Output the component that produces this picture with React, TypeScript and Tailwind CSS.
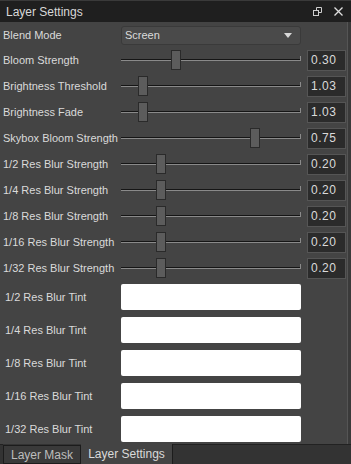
import React from "react";

const sliders = [
  { label: "Bloom Strength", pos: 50, value: "0.30" },
  { label: "Brightness Threshold", pos: 17, value: "1.03" },
  { label: "Brightness Fade", pos: 17, value: "1.03" },
  { label: "Skybox Bloom Strength", pos: 129, value: "0.75" },
  { label: "1/2 Res Blur Strength", pos: 35, value: "0.20" },
  { label: "1/4 Res Blur Strength", pos: 35, value: "0.20" },
  { label: "1/8 Res Blur Strength", pos: 35, value: "0.20" },
  { label: "1/16 Res Blur Strength", pos: 35, value: "0.20" },
  { label: "1/32 Res Blur Strength", pos: 35, value: "0.20" },
];

const tints = [
  "1/2 Res Blur Tint",
  "1/4 Res Blur Tint",
  "1/8 Res Blur Tint",
  "1/16 Res Blur Tint",
  "1/32 Res Blur Tint",
];

function SliderRow({ label, pos, value }: { label: string; pos: number; value: string }) {
  return (
    <div className="flex h-[26px] items-center">
      <div className="w-[121px] whitespace-nowrap pl-[3px] text-[11px] text-[#dadada]">{label}</div>
      <div className="relative h-[20px] w-[180px]">
        <div className="absolute left-0 right-0 top-[9px] h-[1px] bg-[#151515]" />
        <div className="absolute left-0 right-0 top-[10px] h-[1px] bg-[#8a8a8a]" />
        <div className="absolute right-0 top-[6px] h-[4px] w-[1px] bg-[#8a8a8a]" />
        <div
          className="absolute top-0 h-[20px] w-[10px] border border-[#2a2a2a] bg-[#5c5c5c]"
          style={{ left: pos }}
        />
      </div>
      <div className="ml-[6px] flex h-[21px] w-[39px] items-center border border-[#555] bg-[#2b2b2b] pl-[3px] text-[12px] tracking-[0.5px] text-[#dadada]">
        {value}
      </div>
    </div>
  );
}

export default function App() {
  return (
    <div
      className="flex h-[464px] w-[351px] flex-col overflow-hidden bg-[#444444]"
      style={{ fontFamily: "'Liberation Sans', Arial, sans-serif" }}
    >
      <div className="flex h-[22px] shrink-0 items-center border-t border-[#3a3a3a] bg-[#1f1f1f] pl-[6px] pr-[8px]">
        <span className="text-[12px] text-[#d8d8d8]">Layer Settings</span>
        <div className="ml-auto flex items-center gap-[12px]">
          <svg width="9" height="9" viewBox="0 0 9 9" className="text-[#cfcfcf]">
            <rect x="0.5" y="3.5" width="5" height="5" fill="none" stroke="currentColor" />
            <path d="M3.5 3.5V0.5H8.5V5.5H5.5" fill="none" stroke="currentColor" />
          </svg>
          <svg width="9" height="9" viewBox="0 0 9 9" className="text-[#e0e0e0]">
            <path d="M0.5 0.5L8.5 8.5M8.5 0.5L0.5 8.5" stroke="currentColor" strokeWidth="1.3" />
          </svg>
        </div>
      </div>
      <div className="relative flex flex-1 flex-col">
        <div className="absolute right-0 top-0 bottom-0 w-[4px] border-l border-[#555] bg-[#3a3a3a]" />
        <div className="flex h-[24px] items-center pt-[2px]">
          <div className="w-[121px] whitespace-nowrap pl-[3px] text-[11px] text-[#dadada]">Blend Mode</div>
          <div className="flex h-[19px] w-[180px] items-center rounded-[3px] border border-[#3a3a3a] bg-[#4a4a4a] pl-[3px] pr-[8px] text-[11px] text-[#dadada]">
            Screen
            <svg width="8" height="5" viewBox="0 0 8 5" className="ml-auto">
              <path d="M0 0H8L4 5Z" fill="#d8d8d8" />
            </svg>
          </div>
        </div>
        <div className="flex flex-col pt-[1px]">
          {sliders.map((s) => (
            <SliderRow key={s.label} {...s} />
          ))}
        </div>
        <div className="mt-[3px] flex flex-col gap-[7px]">
          {tints.map((t) => (
            <div key={t} className="flex h-[26px] items-center">
              <div className="w-[121px] whitespace-nowrap pl-[5px] text-[11px] text-[#dadada]">{t}</div>
              <div className="h-[26px] w-[180px] rounded-[2px] bg-white" />
            </div>
          ))}
        </div>
      </div>
      <div className="flex h-[20px] shrink-0 items-end bg-[#333333]">
        <div className="w-[3px] self-stretch border-t border-[#222]" />
        <div className="flex h-[19px] w-[78px] items-center justify-center border border-[#1c1c1c] bg-[#3a3a3a] text-[12px] text-[#bdbdbd]">
          Layer Mask
        </div>
        <div className="flex h-[20px] w-[92px] items-center justify-center border-r border-[#1c1c1c] bg-[#444444] text-[12px] text-[#dadada]">
          Layer Settings
        </div>
        <div className="flex-1 self-stretch border-t border-[#222] bg-[#333333]" />
      </div>
    </div>
  );
}
